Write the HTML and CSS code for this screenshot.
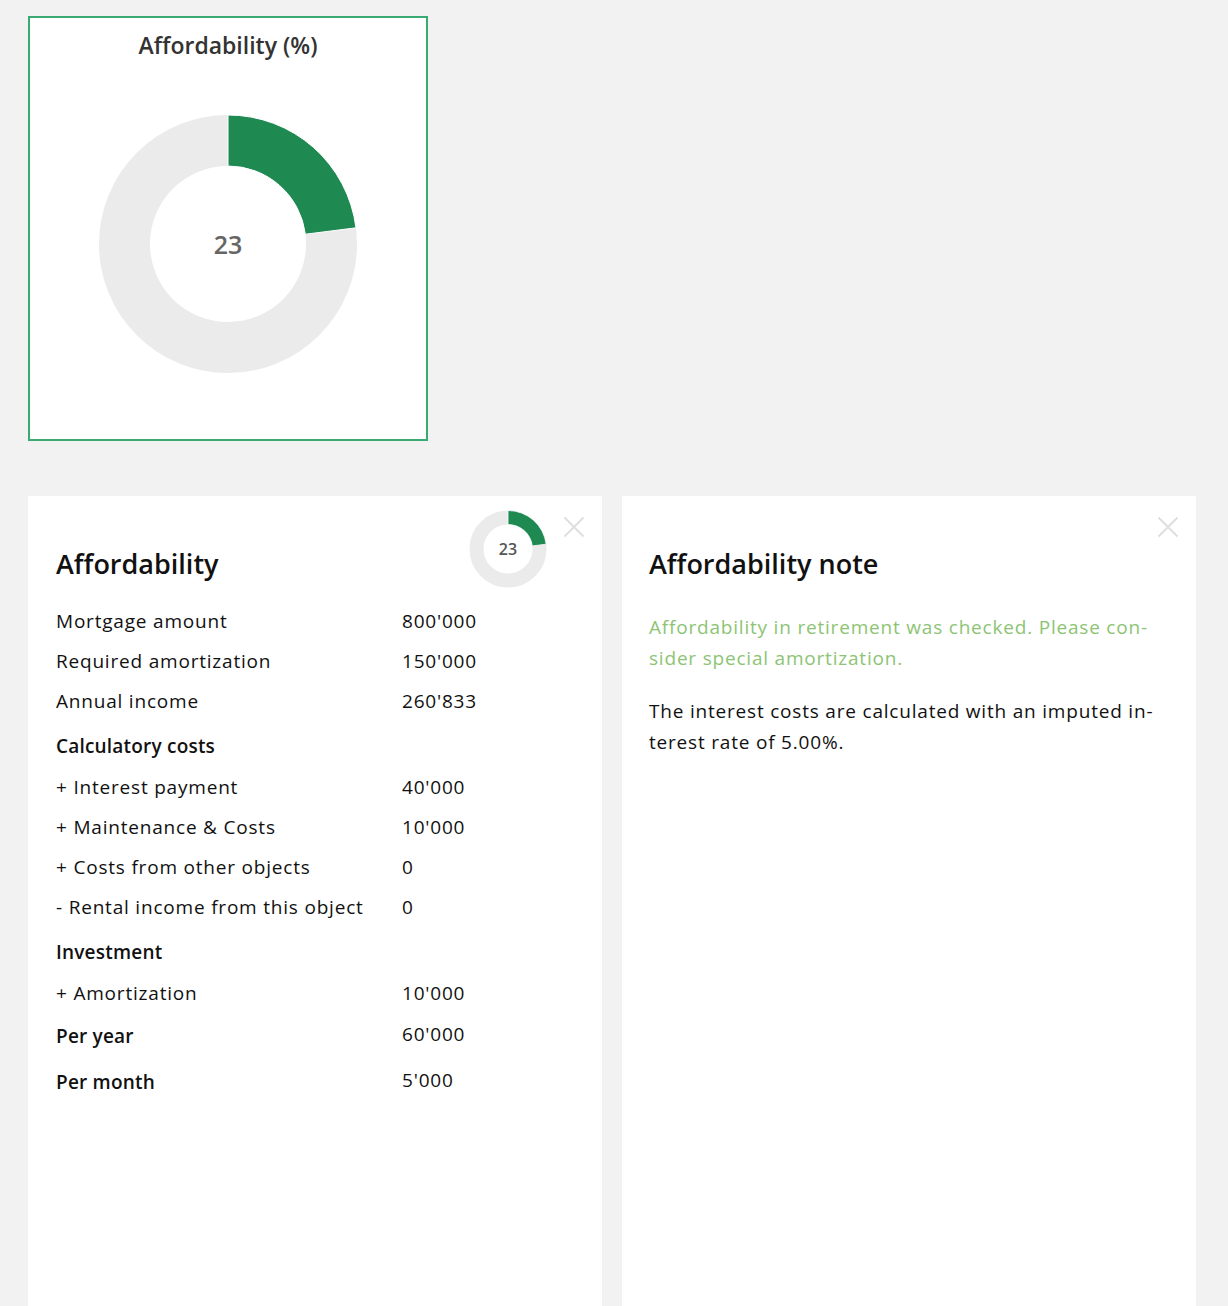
FILE: index.html
```html
<!DOCTYPE html>
<html lang="en">
<head>
<meta charset="utf-8">
<title>Affordability</title>
<link rel="stylesheet" href="styles.css">
</head>
<body>
<div class="page">
  <section class="chart-card">
    <h2 class="chart-title">Affordability (%)</h2>
    <div class="donut">
      <svg width="258" height="258" viewBox="0 0 258 258">
        <circle cx="129" cy="129" r="103.5" fill="none" stroke="#ebebeb" stroke-width="51"/>
        <path d="M129 0 A129 129 0 0 1 256.98 112.83 L206.38 119.22 A78 78 0 0 0 129 51 Z" fill="#1e8a52" stroke="#ffffff" stroke-width="1"/>
      </svg>
      <span class="donut-value">23</span>
    </div>
  </section>

  <div class="panels">
    <section class="panel">
      <div class="mini-donut">
        <svg width="78" height="78" viewBox="0 0 78 78">
          <circle cx="39" cy="39" r="31.5" fill="none" stroke="#ebebeb" stroke-width="14"/>
          <path d="M39 0.5 A38.5 38.5 0 0 1 77.2 34.17 L63.31 35.93 A24.5 24.5 0 0 0 39 14.5 Z" fill="#1e8a52" stroke="#ffffff" stroke-width="0.8"/>
        </svg>
        <span class="mini-value">23</span>
      </div>
      <button class="close" aria-label="Close">
        <svg width="22" height="22" viewBox="0 0 22 22"><path d="M1.5 1.5 L20.5 20.5 M20.5 1.5 L1.5 20.5" stroke="#dedede" stroke-width="1.8" fill="none"/></svg>
      </button>
      <h1 class="panel-title">Affordability</h1>
      <div class="table">
        <div class="row"><span class="label">Mortgage amount</span><span class="value">800'000</span></div>
        <div class="row"><span class="label">Required amortization</span><span class="value">150'000</span></div>
        <div class="row"><span class="label">Annual income</span><span class="value">260'833</span></div>
        <div class="row section"><span class="label">Calculatory costs</span><span class="value"></span></div>
        <div class="row"><span class="label">+ Interest payment</span><span class="value">40'000</span></div>
        <div class="row"><span class="label">+ Maintenance &amp; Costs</span><span class="value">10'000</span></div>
        <div class="row"><span class="label">+ Costs from other objects</span><span class="value">0</span></div>
        <div class="row"><span class="label">- Rental income from this object</span><span class="value">0</span></div>
        <div class="row section"><span class="label">Investment</span><span class="value"></span></div>
        <div class="row"><span class="label">+ Amortization</span><span class="value">10'000</span></div>
        <div class="row total"><span class="label">Per year</span><span class="value">60'000</span></div>
        <div class="row total"><span class="label">Per month</span><span class="value">5'000</span></div>
      </div>
    </section>

    <section class="panel panel-note">
      <button class="close" aria-label="Close">
        <svg width="22" height="22" viewBox="0 0 22 22"><path d="M1.5 1.5 L20.5 20.5 M20.5 1.5 L1.5 20.5" stroke="#dedede" stroke-width="1.8" fill="none"/></svg>
      </button>
      <h1 class="panel-title">Affordability note</h1>
      <p class="note note-green">Affordability in retirement was checked. Please con-<br>sider special amortization.</p>
      <p class="note">The interest costs are calculated with an imputed in-<br>terest rate of 5.00%.</p>
    </section>
  </div>
</div>
</body>
</html>
```

FILE: styles.css
```css
* { box-sizing: border-box; }

html, body {
  margin: 0;
  padding: 0;
  background: #f2f2f2;
}

body {
  font-family: "Open Sans", "Noto Sans", sans-serif;
  color: #111111;
  overflow: hidden;
}

.page {
  padding: 16px 32px 0 28px;
}

.chart-card {
  width: 400px;
  height: 425px;
  border: 2px solid #3aaa72;
  background: #ffffff;
  display: flex;
  flex-direction: column;
  align-items: center;
}

.chart-title {
  margin: 12px 0 0;
  font-size: 23px;
  line-height: 30px;
  font-weight: 600;
  color: #333333;
}

.donut {
  position: relative;
  width: 258px;
  height: 258px;
  margin-top: 55px;
}

.donut svg { display: block; }

.donut-value {
  position: absolute;
  left: 0;
  right: 0;
  top: 50%;
  transform: translateY(-50%);
  text-align: center;
  font-size: 25px;
  font-weight: 600;
  color: #666666;
}

.panels {
  margin-top: 55px;
  display: grid;
  grid-template-columns: 574px 574px;
  gap: 20px;
}

.panel {
  position: relative;
  height: 810px;
  background: #ffffff;
  padding: 48px 28px 0 28px;
}

.panel-note {
  padding-left: 27px;
}

.panel-title {
  margin: 0;
  font-size: 27px;
  line-height: 40px;
  font-weight: 600;
  color: #111111;
}

.mini-donut {
  position: absolute;
  left: 441px;
  top: 14px;
  width: 78px;
  height: 78px;
}

.mini-donut svg { display: block; }

.mini-value {
  position: absolute;
  left: 0;
  right: 0;
  top: 50%;
  transform: translateY(-50%);
  text-align: center;
  font-size: 16px;
  font-weight: 600;
  color: #555555;
}

.close {
  position: absolute;
  right: 17px;
  top: 20px;
  width: 22px;
  height: 22px;
  padding: 0;
  border: 0;
  background: none;
}

.close svg { display: block; }

.table {
  margin-top: 17px;
  display: flex;
  flex-direction: column;
}

.row {
  display: grid;
  grid-template-columns: 346px 1fr;
  height: 40px;
  align-items: center;
  font-size: 19px;
  letter-spacing: 0.8px;
  color: #111111;
}

.row.section {
  height: 46px;
  padding-top: 4px;
  font-weight: 600;
  letter-spacing: 0.2px;
}

.row.total {
  height: 46px;
}

.row.total .label {
  font-weight: 600;
  letter-spacing: 0.2px;
  align-self: end;
  padding-bottom: 10px;
}

.row.total .value {
  align-self: start;
  padding-top: 8px;
}

.note {
  margin: 22px 0 0;
  font-size: 19px;
  letter-spacing: 0.8px;
  line-height: 31px;
  color: #111111;
}

.note-green {
  margin-top: 28px;
  color: #8cc474;
}
```
